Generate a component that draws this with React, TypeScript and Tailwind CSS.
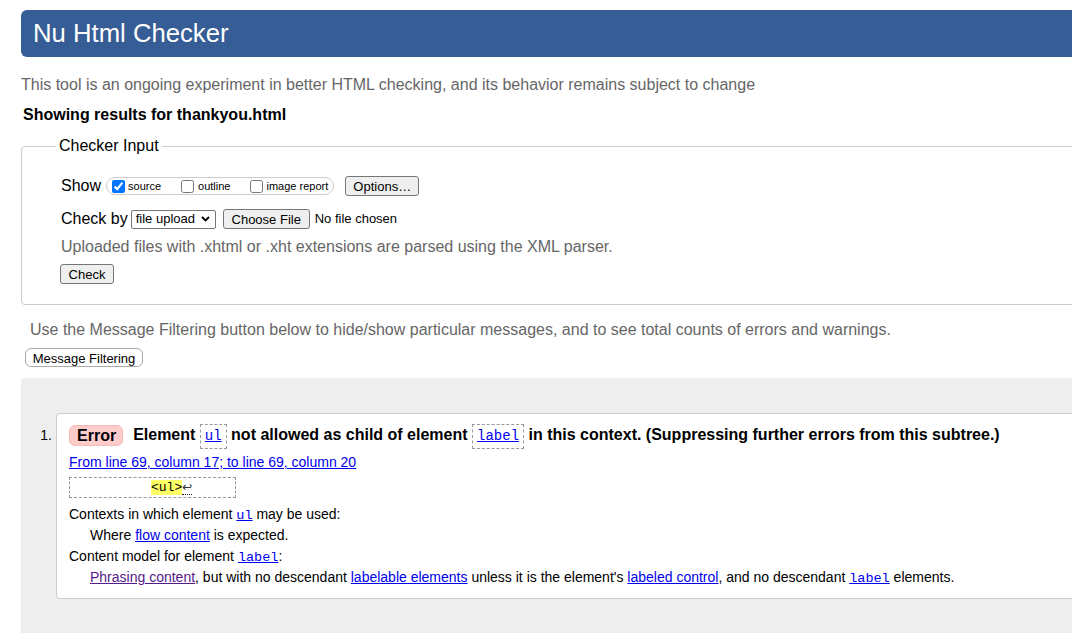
// ── Nu Html Checker results page ───────────────────────────────────────────
export default function App() {
  const link = 'text-[#0000ee] underline';
  const mono = "font-['Liberation_Mono',monospace]";
  return (
    <div className="w-[1072px] h-[637px] overflow-hidden bg-white text-black font-['Liberation_Sans',Arial,sans-serif]">
      <div className="ml-[21px] w-[1100px]">
        {/* Title bar */}
        <div className="mt-[10px] h-[47px] flex items-center pl-[12px] bg-[#365d95] rounded-l-[6px] text-white text-[25.7px]">
          Nu Html Checker
        </div>

        <p className="mt-[18px] text-[16px] leading-[20px] text-[#666]">
          This tool is an ongoing experiment in better HTML checking, and its behavior remains subject to change
        </p>
        <p className="mt-[10px] pl-[2px] text-[16px] leading-[20px] font-bold">
          Showing results for thankyou.html
        </p>

        {/* Checker input */}
        <fieldset className="mt-[11px] border border-[#ccc] rounded-l-[4px] pl-[39px] pt-[20px] pb-[20px] text-[16px]">
          <legend className="ml-[-5px] px-[3px] leading-[20px]">Checker Input</legend>

          <div className="flex items-center h-[20px]">
            <span className="leading-[20px]">Show</span>
            <div className="ml-[5px] h-[18px] flex items-center border border-[#ccc] rounded-[9px] pl-[5px] pr-[5px] text-[11px]">
              <input type="checkbox" defaultChecked className="m-0 w-[13px] h-[13px]" />
              <span className="ml-[3px]">source</span>
              <input type="checkbox" className="ml-[20px] m-0 w-[13px] h-[13px]" />
              <span className="ml-[4px]">outline</span>
              <input type="checkbox" className="ml-[20px] m-0 w-[13px] h-[13px]" />
              <span className="ml-[3px]">image report</span>
            </div>
            <button className="ml-[11px] h-[20px] w-[74px] text-[13px] bg-[#efefef] border border-[#767676] rounded-[3px]">
              Options…
            </button>
          </div>

          <div className="mt-[13px] flex items-center h-[20px]">
            <span className="leading-[20px]">Check by</span>
            <div className="ml-[3px] w-[85px] h-[19px] flex items-center justify-between pl-[4px] pr-[5px] border border-[#767676] rounded-[2px] text-[13px]">
              <span>file upload</span>
              <svg width="9" height="6" viewBox="0 0 9 6">
                <path d="M1 1 L4.5 4.5 L8 1" fill="none" stroke="#000" strokeWidth="1.8" />
              </svg>
            </div>
            <button className="ml-[7px] h-[20px] w-[87px] text-[13px] bg-[#efefef] border border-[#767676] rounded-[3px]">
              Choose File
            </button>
            <span className="ml-[5px] text-[13px]">No file chosen</span>
          </div>

          <p className="mt-[8px] leading-[20px] text-[#666]">
            Uploaded files with .xhtml or .xht extensions are parsed using the XML parser.
          </p>

          <button className="mt-[7px] ml-[-1px] block h-[20px] w-[54px] text-[13px] bg-[#efefef] border border-[#767676] rounded-[3px]">
            Check
          </button>
        </fieldset>

        <p className="mt-[15px] pl-[9px] text-[16px] leading-[20px] text-[#666]">
          Use the Message Filtering button below to hide/show particular messages, and to see total counts of errors and warnings.
        </p>
        <button className="mt-[8px] ml-[4px] block h-[19px] w-[118px] text-[13px] bg-white border border-[#aaa] rounded-[6px]">
          Message Filtering
        </button>

        {/* Results */}
        <div className="mt-[11px] bg-[#eee] rounded-tl-[4px] pt-[35px] pb-[34px] flex">
          <div className="w-[35px] shrink-0 text-right pr-[4px] pt-[9px] text-[14px] leading-[26px]">1.</div>
          <div className="flex-1 bg-white border border-[#ccc] rounded-l-[4px] pl-[12px] pt-[8px] pb-[10px]">
            <div className="flex items-center h-[26px] text-[16px] font-bold whitespace-nowrap">
              <span className="h-[21px] leading-[19px] pl-[7px] pr-[6px] bg-[#fcc] border border-[#f3b8b8] rounded-[6px]">
                Error
              </span>
              <span className="ml-[10px] leading-[26px]">
                Element{' '}
                <code className={`inline-block ${mono} font-normal text-[14px] leading-[23px] px-[4px] border border-dashed border-[#999] ${link}`}>
                  ul
                </code>{' '}
                not allowed as child of element{' '}
                <code className={`inline-block ${mono} font-normal text-[14px] leading-[23px] px-[4px] border border-dashed border-[#999] ${link}`}>
                  label
                </code>{' '}
                in this context. (Suppressing further errors from this subtree.)
              </span>
            </div>

            <div className="mt-[5px] text-[14px] leading-[18px]">
              <span className={link}>From line 69, column 17; to line 69, column 20</span>
            </div>

            <div className={`mt-[6px] w-[167px] h-[21px] border border-dashed border-[#999] pl-[3px] ${mono} text-[13px] leading-[18px] whitespace-pre`}>
              {'          '}
              <span className="bg-[#ff6]">&lt;ul&gt;</span>
              <span className="font-['DejaVu_Sans',sans-serif] text-[12px] border-b border-dotted border-[#222] text-[#333]">↩</span>
            </div>

            <div className="mt-[6px] text-[14px] leading-[21px]">
              <p>
                Contexts in which element{' '}
                <code className={`${mono} text-[13.5px] leading-none ${link}`}>ul</code> may be used:
              </p>
              <p className="pl-[21px]">
                Where <span className={link}>flow content</span> is expected.
              </p>
              <p>
                Content model for element{' '}
                <code className={`${mono} text-[13.5px] leading-none ${link}`}>label</code>:
              </p>
              <p className="pl-[21px]">
                <span className="text-[#551a8b] underline">Phrasing content</span>, but with no descendant{' '}
                <span className={link}>labelable elements</span> unless it is the element's{' '}
                <span className={link}>labeled control</span>, and no descendant{' '}
                <code className={`${mono} text-[13.5px] leading-none ${link}`}>label</code> elements.
              </p>
            </div>
          </div>
        </div>
      </div>
    </div>
  );
}
